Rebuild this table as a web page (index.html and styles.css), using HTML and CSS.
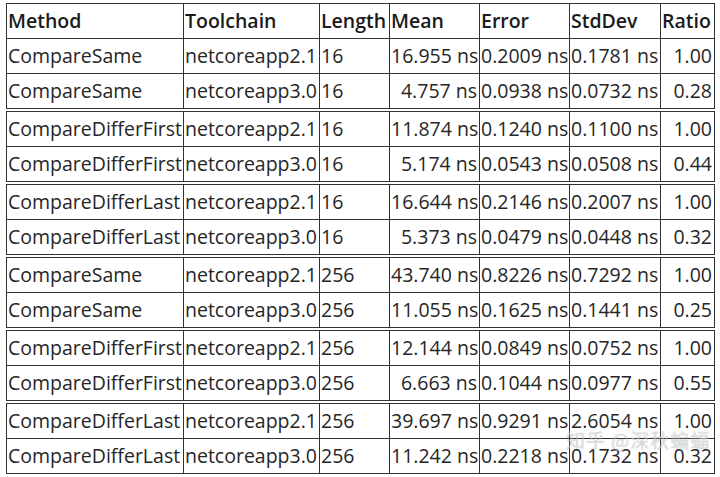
FILE: index.html
```html
<!DOCTYPE html>
<html lang="en">
<head>
<meta charset="utf-8">
<title>Benchmark</title>
<link rel="stylesheet" href="styles.css">
</head>
<body>
<div class="wrap">
<table class="bench">
  <colgroup>
    <col class="c-method"><col class="c-tool"><col class="c-len"><col class="c-mean"><col class="c-err"><col class="c-sd"><col class="c-ratio">
  </colgroup>
  <thead>
    <tr><th>Method</th><th>Toolchain</th><th>Length</th><th>Mean</th><th>Error</th><th>StdDev</th><th>Ratio</th></tr>
  </thead>
  <tbody>
    <tr><td>CompareSame</td><td>netcoreapp2.1</td><td>16</td><td class="num">16.955 ns</td><td class="num">0.2009 ns</td><td class="num">0.1781 ns</td><td class="num">1.00</td></tr>
    <tr><td>CompareSame</td><td>netcoreapp3.0</td><td>16</td><td class="num">4.757 ns</td><td class="num">0.0938 ns</td><td class="num">0.0732 ns</td><td class="num">0.28</td></tr>
  </tbody>
  <tbody>
    <tr><td>CompareDifferFirst</td><td>netcoreapp2.1</td><td>16</td><td class="num">11.874 ns</td><td class="num">0.1240 ns</td><td class="num">0.1100 ns</td><td class="num">1.00</td></tr>
    <tr><td>CompareDifferFirst</td><td>netcoreapp3.0</td><td>16</td><td class="num">5.174 ns</td><td class="num">0.0543 ns</td><td class="num">0.0508 ns</td><td class="num">0.44</td></tr>
  </tbody>
  <tbody>
    <tr><td>CompareDifferLast</td><td>netcoreapp2.1</td><td>16</td><td class="num">16.644 ns</td><td class="num">0.2146 ns</td><td class="num">0.2007 ns</td><td class="num">1.00</td></tr>
    <tr><td>CompareDifferLast</td><td>netcoreapp3.0</td><td>16</td><td class="num">5.373 ns</td><td class="num">0.0479 ns</td><td class="num">0.0448 ns</td><td class="num">0.32</td></tr>
  </tbody>
  <tbody>
    <tr><td>CompareSame</td><td>netcoreapp2.1</td><td>256</td><td class="num">43.740 ns</td><td class="num">0.8226 ns</td><td class="num">0.7292 ns</td><td class="num">1.00</td></tr>
    <tr><td>CompareSame</td><td>netcoreapp3.0</td><td>256</td><td class="num">11.055 ns</td><td class="num">0.1625 ns</td><td class="num">0.1441 ns</td><td class="num">0.25</td></tr>
  </tbody>
  <tbody>
    <tr><td>CompareDifferFirst</td><td>netcoreapp2.1</td><td>256</td><td class="num">12.144 ns</td><td class="num">0.0849 ns</td><td class="num">0.0752 ns</td><td class="num">1.00</td></tr>
    <tr><td>CompareDifferFirst</td><td>netcoreapp3.0</td><td>256</td><td class="num">6.663 ns</td><td class="num">0.1044 ns</td><td class="num">0.0977 ns</td><td class="num">0.55</td></tr>
  </tbody>
  <tbody>
    <tr><td>CompareDifferLast</td><td>netcoreapp2.1</td><td>256</td><td class="num">39.697 ns</td><td class="num">0.9291 ns</td><td class="num">2.6054 ns</td><td class="num">1.00</td></tr>
    <tr><td>CompareDifferLast</td><td>netcoreapp3.0</td><td>256</td><td class="num">11.242 ns</td><td class="num">0.2218 ns</td><td class="num">0.1732 ns</td><td class="num">0.32</td></tr>
  </tbody>
</table>
<div class="watermark">知乎 @深秋蝙蝠</div>
</div>
</body>
</html>
```

FILE: styles.css
```css
html, body {
  margin: 0;
  padding: 0;
  background: #ffffff;
}
body {
  font-family: "Open Sans", "Noto Sans", "Noto Sans CJK SC", sans-serif;
  color: #262626;
}
.wrap {
  position: relative;
  padding: 3px 0 0 6px;
}
.bench {
  border-collapse: collapse;
  table-layout: fixed;
  width: 708px;
  font-size: 19.5px;
  line-height: 20px;
}
.c-method { width: 177px; }
.c-tool { width: 136px; }
.c-len { width: 70px; }
.c-mean { width: 90px; }
.c-err { width: 90px; }
.c-sd { width: 91px; }
.c-ratio { width: 54px; }
.bench th, .bench td {
  border: 1px solid #333;
  padding: 7px 0 7px 1px;
  height: 20px;
  white-space: nowrap;
  overflow: hidden;
  text-align: left;
}
.bench th {
  font-weight: 600;
  color: #1a1a1a;
}
.bench td.num {
  text-align: right;
  padding-right: 2px;
}
.bench tbody + tbody {
  border-top: 4px double #333;
}
.watermark {
  position: absolute;
  left: 566px;
  top: 429px;
  font-size: 19px;
  line-height: 22px;
  font-family: "Noto Sans CJK SC", sans-serif;
  color: rgba(255, 255, 255, 0.5);
  text-shadow: 0 0 1px rgba(0, 0, 0, 0.3);
  letter-spacing: 1px;
}
```
